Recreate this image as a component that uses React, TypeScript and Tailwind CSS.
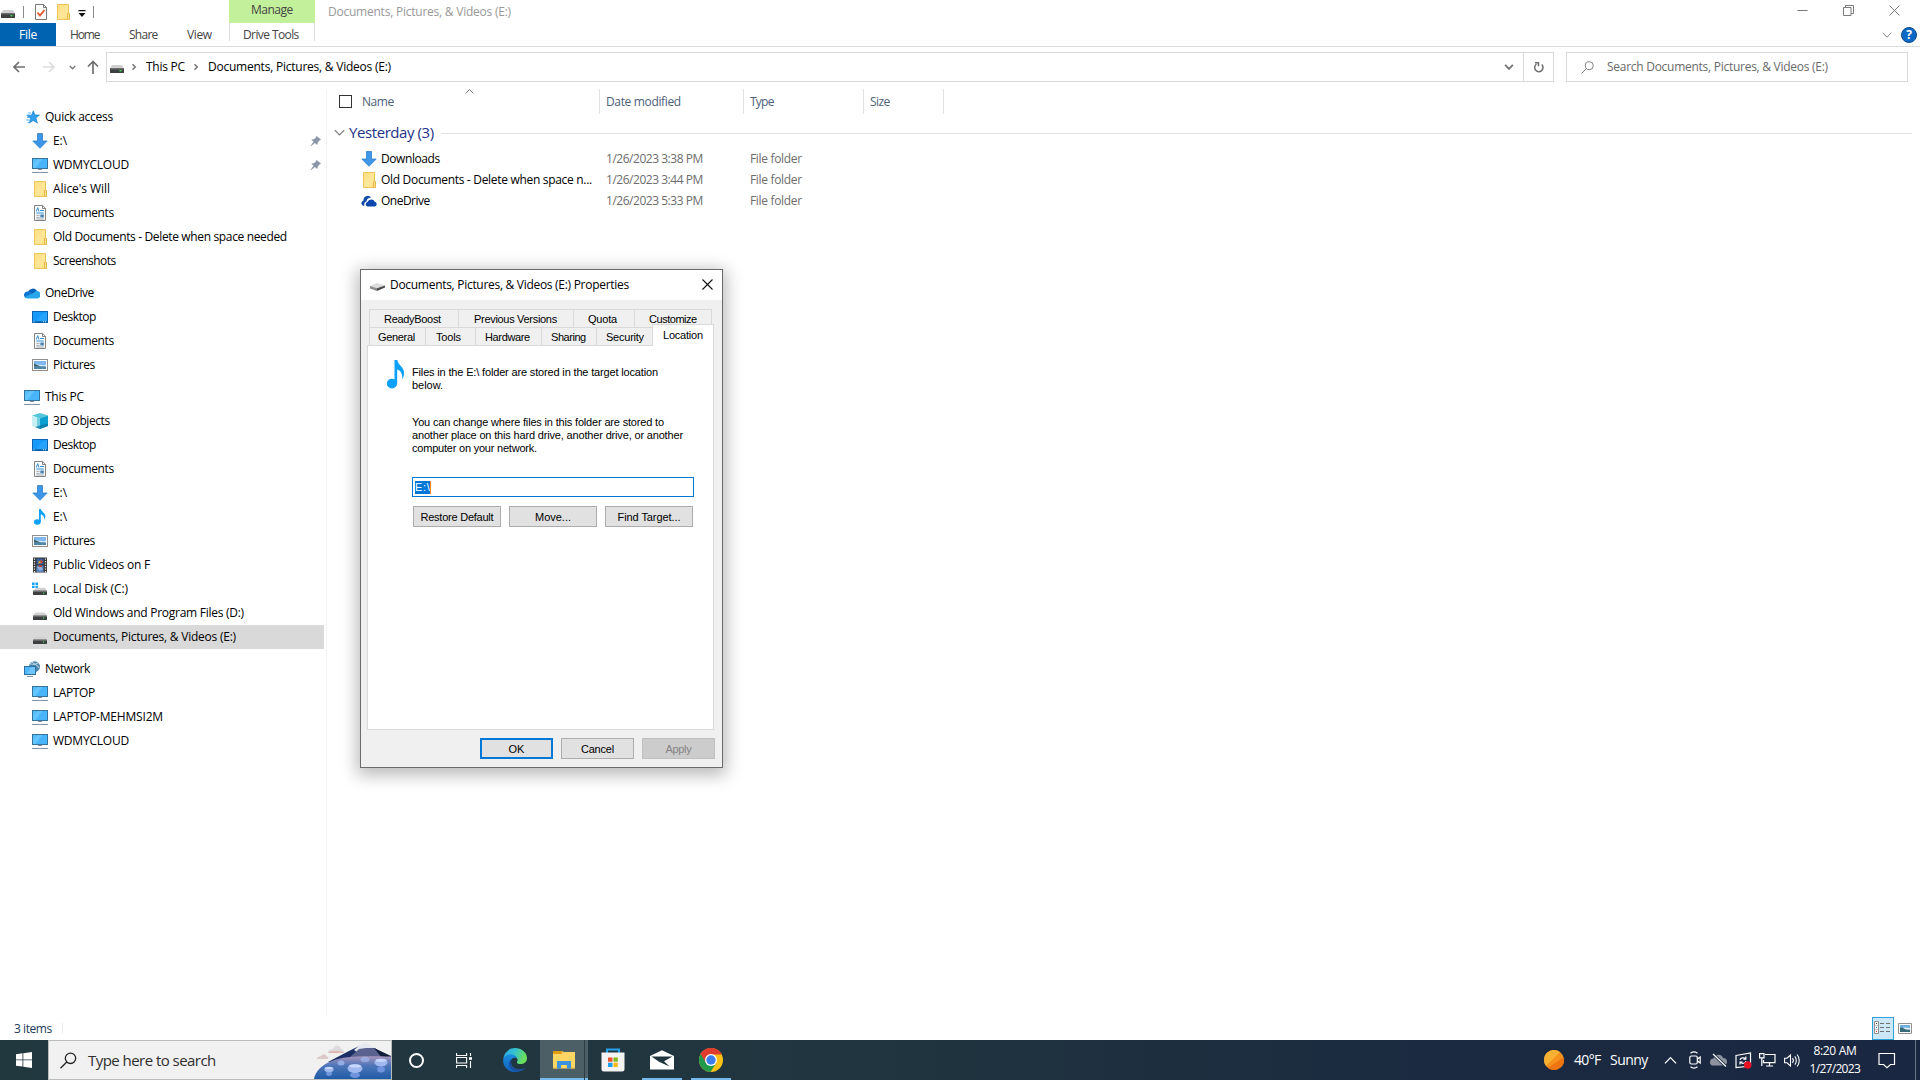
import { useLayoutEffect, useRef, useState } from "react";
import type { ReactNode } from "react";

/* Single line of text, tracked so that it fills the given width. */
function Label({ text, w, className = "" }: { text: string; w: number; className?: string }) {
  const ref = useRef<HTMLSpanElement>(null);
  const [ls, setLs] = useState(0);
  useLayoutEffect(() => {
    const el = ref.current;
    if (!el) return;
    el.style.letterSpacing = "0px";
    const natural = el.getBoundingClientRect().width;
    setLs((w - natural) / Math.max(1, text.length - 0.5));
  }, [text, w]);
  return (
    <span className={`flex shrink-0 whitespace-pre ${className}`} style={{ width: w }}>
      <span ref={ref} className="whitespace-pre" style={{ letterSpacing: `${ls}px` }}>
        {text}
      </span>
    </span>
  );
}

/* ---------- icons ---------- */
type P = { className?: string };

const Drive = ({ className = "" }: P) => (
  <svg className={`shrink-0 ${className}`} width="14" height="8" viewBox="0 0 14 8">
    <path d="M2 0h10l2 3.500H0z" fill="#cfcfcf" />
    <rect y="3" width="14" height="5" rx=".6" fill="#3d3f40" />
    <rect y="3" width="14" height="1.400" fill="#6d6f70" />
    <rect x="9.500" y="5" width="2" height="1.400" fill="#3fe04f" />
  </svg>
);
const Drive16 = () => (
  <svg width="16" height="16" viewBox="0 0 16 16">
    <path d="M3.200 7.500h9.600l2.200 3.500H1z" fill="#d2d2d2" />
    <rect x="1" y="10.800" width="14" height="4.200" rx=".6" fill="#3d3f40" />
    <rect x="1" y="10.500" width="14" height="1.200" fill="#77797a" />
    <rect x="11" y="12.400" width="1.200" height="1.200" fill="#3fe04f" />
  </svg>
);
const DriveC = () => (
  <svg width="16" height="16" viewBox="0 0 16 16">
    <path d="M0 1.500h2.600v2.400H0zM3.400 1.500H6v2.400H3.400zM0 4.700h2.600v2.400H0zM3.400 4.700H6v2.400H3.400z" fill="#18a2f2" />
    <path d="M4.500 6.800h8.700L15 10H1.500z" fill="#d2d2d2" />
    <rect x="1" y="9.800" width="14" height="4.200" rx=".6" fill="#3d3f40" />
    <rect x="1" y="9.600" width="14" height="1.200" fill="#77797a" />
    <rect x="11" y="11.500" width="1.200" height="1.200" fill="#3fe04f" />
  </svg>
);
const Folder = () => (
  <svg width="16" height="16" viewBox="0 0 16 16">
    <path d="M2.500.5h11v15h-11z" fill="#ffe18b" stroke="#edc558" />
    <path d="M3 9.500 11.500 1H13v9l-5 5H3z" fill="#ffe79f" opacity=".6" />
    <path d="M12.500 9.500h2v6h-2z" fill="#ffe18b" stroke="#e6b94a" />
  </svg>
);
const Down = () => (
  <svg width="16" height="16" viewBox="0 0 16 16">
    <path d="M5.500.5h5v7.500h4.700L8 15.300.8 8h4.700z" fill="#3d97e6" stroke="#2f7fc9" strokeWidth=".8" />
  </svg>
);
const Monitor = () => (
  <svg width="16" height="16" viewBox="0 0 16 16">
    <rect x=".5" y="1.500" width="15" height="10" fill="#55bdfb" stroke="#35739b" />
    <path d="M1 11V7l5-5h9v9z" fill="#7ccdfd" opacity=".45" />
    <path d="M10 2h5v9H3.500z" fill="#2fa9f7" opacity=".55" />
    <path d="M6 12.500h4M0 15.500h16" stroke="#8695a5" />
  </svg>
);
const Doc = () => (
  <svg width="16" height="16" viewBox="0 0 16 16">
    <path d="M2.500.5h8.200l2.800 2.800v12.200h-11z" fill="#fff" stroke="#858585" />
    <path d="M10.500.5v3h3" fill="none" stroke="#858585" />
    <path d="M4.300 6.500 5.700 2.600 7 6.500M8 5.500h4M4.300 8h7.500" fill="none" stroke="#2b8fd8" />
    <path d="M4.300 10.300h3.400M4.300 12.300h3.400M4.300 14h7.500" stroke="#8f9aa5" strokeWidth=".9" />
    <rect x="8.300" y="9.500" width="3.600" height="3" fill="#4b84b3" />
  </svg>
);
const Desktop = () => (
  <svg width="16" height="16" viewBox="0 0 16 16">
    <rect x=".5" y="2.500" width="15" height="11" fill="#169bfb" stroke="#0c66b4" />
    <path d="M5 12C7 7 11 4 15 3v9z" fill="#3fb0ff" opacity=".4" />
    <path d="M1 13h14" stroke="#0a4f91" />
    <path d="M1.500 12.800h1M11 12.800h1M13 12.800h1" stroke="#fff" strokeWidth=".9" />
  </svg>
);
const Pic = () => (
  <svg width="16" height="16" viewBox="0 0 16 16">
    <rect x=".5" y="2.500" width="15" height="11" fill="#fff" stroke="#8f8f8f" />
    <rect x="2" y="4" width="12" height="8" fill="#7db8ee" />
    <path d="M2 7.500c3-1 6 1 12 .6V10H2z" fill="#d9ecf7" />
    <path d="M2 6.500c3 1.500 5 2 8 3.200H2z" fill="#35606a" />
    <path d="M2 10c4-.8 8-.8 12-.4V12H2z" fill="#4d86a8" />
  </svg>
);
const Note = ({ w = 16, h = 16 }: { w?: number; h?: number }) => (
  <svg width={w} height={h} viewBox="0 0 16 16" preserveAspectRatio="none" className="shrink-0">
    <ellipse cx="5.300" cy="13" rx="3.400" ry="2.700" fill="#0aa0fb" />
    <path d="M7 0h1.900c.2 2.700 4.800 3.800 4.500 7.600-.1 1.200-.6 2.300-1.300 3.200.5-3-.8-5-3.300-5.600V13H7z" fill="#0aa0fb" />
  </svg>
);
const Film = () => (
  <svg width="16" height="16" viewBox="0 0 16 16">
    <rect x="1" y=".5" width="14" height="15" fill="#333" />
    <rect x="4.500" y="1.500" width="7" height="6" fill="#3a5f9c" />
    <rect x="4.500" y="8.500" width="7" height="6.500" fill="#5a86c4" />
    <path d="M8 2.500l3 2-2 2.500z" fill="#d9482b" />
    <path d="M5 10l3-1 3 3-3 2z" fill="#8fb2de" />
    <path d="M7 3.500l2 2-3 1.500z" fill="#e1a62b" />
    <path d="M6 8.500h4v1.500H7z" fill="#c93f2b" />
    <path d="M2.500 1.500v14M13.500 1.500v14" stroke="#eee" strokeWidth="1.300" strokeDasharray="1.300 1.200" />
  </svg>
);
const Cube = () => (
  <svg width="16" height="16" viewBox="0 0 16 16">
    <path d="M0 2.500 8 0l8 2.500L8 6z" fill="#53c6dc" />
    <path d="M0 2.500 8 5.500V16l-8-3z" fill="#c9eef3" />
    <path d="M16 2.500 8 5.500V16l8-3z" fill="#0c9fd0" />
    <path d="M5 4.500 8 5.500V16l-3-1.200z" fill="#6fd0e2" />
    <path d="M8 12.500l8-2v2.500l-8 3-5-1.900z" fill="#0b74a3" opacity=".75" />
  </svg>
);
const Star = () => (
  <svg width="16" height="16" viewBox="0 0 16 16">
    <path d="m9.300 1.800 1.600 4.200 4.600.1-3.600 3 1.500 5-4.200-2.600-4 2.600 1.400-4.700L3 6.600l4.500-.4z" fill="#2f9fee" stroke="#1b7fc9" strokeWidth=".7" />
    <path d="M4 4h3M2.500 6h3M3 8.500h3M2 11h3.500M3.500 13.500h2" stroke="#4ab0f4" strokeWidth=".9" />
  </svg>
);
const Cloud = () => (
  <svg width="16" height="16" viewBox="0 0 16 16">
    <path d="M4 7a5 5 0 0 1 9-1l-2 4z" fill="#0364b8" />
    <path d="M0 10.500A3.500 3.500 0 0 1 4 6.600c3 0 5 2 7 4L3.500 13A3 3 0 0 1 0 10.500z" fill="#0f78d4" />
    <path d="M13 6a3.700 3.700 0 0 1-.3 7.400H3.300A3.400 3.400 0 0 1 .8 12L9 8.200A6 6 0 0 1 13 6z" fill="#28a8ea" />
  </svg>
);
const CloudDark = () => (
  <svg width="16" height="16" viewBox="0 0 16 16">
    <path d="M.4 10.200A2.800 2.800 0 0 1 2.500 7.500 4.200 4.200 0 0 1 10 4.500C7 4.600 5.700 6.500 5.500 8.500c-2 .3-2.700 2.600-2 4.300C1.500 12.800.4 11.600.4 10.200z" fill="#0f4aa8" />
    <path d="M6.500 13.500a2.300 2.300 0 0 1 0-4.500 4 4 0 0 1 7.300-.3 2.500 2.500 0 0 1 .2 4.800z" fill="#0b47ad" />
  </svg>
);
const NetworkIcon = () => (
  <svg width="16" height="16" viewBox="0 0 16 16">
    <circle cx="10.500" cy="5.700" r="5.500" fill="#4d86ad" />
    <path d="M6 3c2-.5 3 1 5 .2S14 2 14.500 3M8 1c2 2 6 3 7 6" stroke="#c6dcea" strokeWidth="1" fill="none" />
    <rect x=".5" y="5.500" width="11" height="8" fill="#50b8fa" stroke="#2d6f9e" />
    <path d="M7 6h4v7H3z" fill="#8bd2fe" opacity=".5" />
    <path d="M3 15.500h6" stroke="#8695a5" />
  </svg>
);
const Pin = () => (
  <svg className="shrink-0" width="12" height="12" viewBox="0 0 12 12">
    <path d="M6.500.8 11.300 5 9.700 5.300 7.800 7.500 7.300 10 4.900 8 .9 11.300.5 10.900 3.500 6.800 1.300 4.500 4 4.200 6.200 2.300z" fill="#8a96a8" />
  </svg>
);
const Chevron = ({ className = "", dir = "down", w = 10 }: P & { dir?: "down" | "up"; w?: number }) => (
  <svg className={`shrink-0 ${className}`} width={w} height={w} viewBox="0 0 10 10" fill="none" stroke="currentColor">
    <path d={dir === "down" ? "M.7 2.800 5 7.200 9.300 2.800" : "M.7 7.200 5 2.800 9.300 7.200"} />
  </svg>
);
const Thick = ({ dir, w = 8 }: { dir: "down" | "right"; w?: number }) => (
  <svg className="shrink-0" width={w} height={w} viewBox="0 0 8 8" fill="none" stroke="#767676" strokeWidth="1.500">
    <path d={dir === "down" ? "M.9 2.300 4 5.500 7.100 2.300" : "M2.500 1.200 5.300 4 2.500 6.800"} />
  </svg>
);
const Arrow = ({ color, up = false }: { color: string; up?: boolean }) => (
  <svg className="shrink-0" width="14" height="14" viewBox="0 0 14 14" fill="none" stroke={color} strokeWidth="1.700">
    <path d={up ? "M7 14V1.500M2 6.500 7 1.500l5 5" : "M13 7H2M7 2 2 7l5 5"} />
  </svg>
);

/* ---------- navigation pane ---------- */
type Item = { icon: ReactNode; text: string; w: number; pin?: boolean; selected?: boolean };
const groups: { head: Item; items: Item[] }[] = [
  {
    head: { icon: <Star />, text: "Quick access", w: 68 },
    items: [
      { icon: <Down />, text: "E:\\", w: 14, pin: true },
      { icon: <Monitor />, text: "WDMYCLOUD", w: 76, pin: true },
      { icon: <Folder />, text: "Alice's Will", w: 57 },
      { icon: <Doc />, text: "Documents", w: 61 },
      { icon: <Folder />, text: "Old Documents - Delete when space needed", w: 234 },
      { icon: <Folder />, text: "Screenshots", w: 63 },
    ],
  },
  {
    head: { icon: <Cloud />, text: "OneDrive", w: 49 },
    items: [
      { icon: <Desktop />, text: "Desktop", w: 43 },
      { icon: <Doc />, text: "Documents", w: 61 },
      { icon: <Pic />, text: "Pictures", w: 42 },
    ],
  },
  {
    head: { icon: <Monitor />, text: "This PC", w: 39 },
    items: [
      { icon: <Cube />, text: "3D Objects", w: 57 },
      { icon: <Desktop />, text: "Desktop", w: 43 },
      { icon: <Doc />, text: "Documents", w: 61 },
      { icon: <Down />, text: "E:\\", w: 14 },
      { icon: <Note />, text: "E:\\", w: 14 },
      { icon: <Pic />, text: "Pictures", w: 42 },
      { icon: <Film />, text: "Public Videos on F", w: 97 },
      { icon: <DriveC />, text: "Local Disk (C:)", w: 75 },
      { icon: <Drive16 />, text: "Old Windows and Program Files (D:)", w: 191 },
      { icon: <Drive16 />, text: "Documents, Pictures, & Videos (E:)", w: 183, selected: true },
    ],
  },
  {
    head: { icon: <NetworkIcon />, text: "Network", w: 45 },
    items: [
      { icon: <Monitor />, text: "LAPTOP", w: 42 },
      { icon: <Monitor />, text: "LAPTOP-MEHMSI2M", w: 110 },
      { icon: <Monitor />, text: "WDMYCLOUD", w: 76 },
    ],
  },
];

function NavPane() {
  return (
    <nav className="flex w-[327px] shrink-0 flex-col gap-2 border-r border-[#f2f2f2] pt-4 text-black">
      {groups.map((g) => (
        <div key={g.head.text}>
          <div className="flex h-6 items-center gap-[5px] pl-6">
            {g.head.icon}
            <Label text={g.head.text} w={g.head.w} />
          </div>
          {g.items.map((i, n) => (
            <div key={n} className={`flex h-6 w-[324px] items-center gap-[5px] pl-8 ${i.selected ? "bg-[#d9d9d9]" : ""}`}>
              {i.icon}
              <Label text={i.text} w={i.w} />
              {i.pin && (
                <span className="ml-auto mr-[2px]">
                  <Pin />
                </span>
              )}
            </div>
          ))}
        </div>
      ))}
    </nav>
  );
}

/* ---------- top bars ---------- */
function TitleBar() {
  return (
    <div className="flex h-[23px] items-start">
      <div className="flex h-[23px] w-[229px] items-center pl-px">
        <Drive className="mt-1" />
        <span className="ml-2 h-3 w-px bg-[#8a8a8a]" />
        <svg className="ml-[11px]" width="12" height="16" viewBox="0 0 12 16">
          <path d="M.5.5h8l3 3v12H.5z" fill="#fff" stroke="#777" />
          <path d="M8.500.5v3h3" fill="none" stroke="#777" />
          <path d="m2.500 8.500 2.500 3L9.500 6" fill="none" stroke="#e25a2b" strokeWidth="1.900" />
        </svg>
        <span className="ml-2">
          <Folder />
        </span>
        <svg className="ml-[7px] mt-1" width="8" height="8" viewBox="0 0 8 8">
          <path d="M.5 0h7v1.200h-7zM.5 3h7L4 7z" fill="#111" />
        </svg>
        <span className="ml-[7px] h-3 w-px bg-[#8a8a8a]" />
      </div>
      <div className="flex h-[23px] w-[86px] justify-center bg-[#c3f09b] pt-[2px] text-[#444]">
        <Label text="Manage" w={42} />
      </div>
      <div className="ml-[13px] pt-1 text-[#999]">
        <Label text="Documents, Pictures, & Videos (E:)" w={183} />
      </div>
      <div className="ml-auto flex items-center gap-[35px] pr-5 pt-[5px]">
        <svg width="11" height="11" viewBox="0 0 11 11" stroke="#7a7a7a">
          <path d="M.5 5.500h10" />
        </svg>
        <svg width="11" height="11" viewBox="0 0 11 11" stroke="#7a7a7a" fill="none">
          <path d="M.5 2.500h7.500v8H.5zM2.500 2.500v-2h8v8H8" />
        </svg>
        <svg width="11" height="11" viewBox="0 0 11 11" stroke="#7a7a7a">
          <path d="m.5.5 10 10M10.500.5l-10 10" />
        </svg>
      </div>
    </div>
  );
}

function RibbonTabs() {
  return (
    <div className="flex h-6 border-b border-[#dadbdc] text-[#444]">
      <div className="flex h-[23px] w-14 items-center justify-center bg-[#0063b1] text-white">
        <Label text="File" w={18} />
      </div>
      <div className="flex h-[23px] items-center pl-[14px]">
        <Label text="Home" w={30} />
        <Label text="Share" w={29} className="ml-[29px]" />
        <Label text="View" w={25} className="ml-[29px]" />
      </div>
      <div className="ml-[17px] flex h-[18px] w-[86px] border-x border-[#dcdcdc] pl-[13px] pt-[4px]">
        <Label text="Drive Tools" w={56} />
      </div>
      <div className="ml-auto flex h-[23px] items-center gap-[9px] pr-[3px]">
        <Chevron className="text-[#8a8a8a]" />
        <span className="flex size-4 items-center justify-center rounded-full border border-[#0a4d8c] bg-[#0b68c4] text-[12px] font-bold leading-none text-white">
          ?
        </span>
      </div>
    </div>
  );
}

function AddressBar() {
  return (
    <div className="flex h-[42px] items-center pb-[2px]">
      <div className="flex w-[106px] items-center pl-3">
        <Arrow color="#6f6f6f" />
        <span className="ml-4 rotate-180">
          <Arrow color="#dcdcdc" />
        </span>
        <span className="ml-[13px]">
          <Thick dir="down" w={7} />
        </span>
        <span className="ml-[10px]">
          <Arrow color="#6f6f6f" up />
        </span>
      </div>
      <div className="flex h-[30px] w-[1448px] items-center border border-[#d9d9d9] pl-[3px] text-black">
        <Drive className="mt-1" />
        <span className="ml-[6px] w-[8px]">
          <Thick dir="right" />
        </span>
        <Label text="This PC" w={39} className="ml-2" />
        <span className="ml-[7px] w-[8px]">
          <Thick dir="right" />
        </span>
        <Label text="Documents, Pictures, & Videos (E:)" w={183} className="ml-2" />
        <div className="ml-auto flex h-full items-center">
          <Thick dir="down" w={10} />
          <div className="ml-[9px] flex h-full w-[30px] items-center justify-center border-l border-[#d9d9d9]">
            <svg width="12" height="12" viewBox="0 0 12 12" fill="none" stroke="#6f6f6f" strokeWidth="1.500">
              <path d="M3.500 3A4.200 4.200 0 1 0 8.800 3.500M2 1.700h3.500v3.500" />
            </svg>
          </div>
        </div>
      </div>
      <div className="ml-3 flex h-[30px] w-[342px] items-center border border-[#d9d9d9] pl-[14px] text-[#6a6a6a]">
        <svg width="13" height="13" viewBox="0 0 13 13" fill="none" stroke="#808080">
          <circle cx="8.300" cy="4.700" r="4" />
          <path d="M5.500 7.500.5 12.500" />
        </svg>
        <Label text="Search Documents, Pictures, & Videos (E:)" w={221} className="ml-[13px]" />
      </div>
    </div>
  );
}

/* ---------- file list ---------- */
const files = [
  { icon: <Down />, name: "Downloads", w: 59, date: "1/26/2023 3:38 PM" },
  { icon: <Folder />, name: "Old Documents - Delete when space n...", w: 211, date: "1/26/2023 3:44 PM" },
  { icon: <CloudDark />, name: "OneDrive", w: 49, date: "1/26/2023 5:33 PM" },
];

function FileList() {
  return (
    <main className="flex flex-1 flex-col">
      <div className="flex h-[25px] text-[#4c607a]">
        <div className="relative flex w-[273px] items-center border-r border-[#e2e2e2] pl-3">
          <span className="size-[13px] border border-[#333]" />
          <Label text="Name" w={32} className="ml-[10px]" />
          <Chevron dir="up" w={9} className="absolute -top-[2px] left-[138px] text-[#666]" />
        </div>
        <div className="flex w-[144px] items-center border-r border-[#e2e2e2] pl-[6px]">
          <Label text="Date modified" w={75} />
        </div>
        <div className="flex w-[120px] items-center border-r border-[#e2e2e2] pl-[6px]">
          <Label text="Type" w={24} />
        </div>
        <div className="flex w-[80px] items-center border-r border-[#e2e2e2] pl-[6px]">
          <Label text="Size" w={20} />
        </div>
      </div>
      <div className="mt-[7px] flex h-6 items-center pl-[7px] pr-2 text-[15px] text-[#1e3287]">
        <Chevron w={11} className="-mt-[2px] text-[#777]" />
        <Label text="Yesterday (3)" w={85} className="-mt-[2px] ml-1" />
        <span className="ml-[7px] h-px flex-1 bg-[#e2e2e2]" />
      </div>
      <div className="mt-[3px]">
        {files.map((f) => (
          <div key={f.name} className="flex h-[21px] items-center pl-[34px] text-[#6d6d6d]">
            {f.icon}
            <div className="ml-1 w-[225px] text-black">
              <Label text={f.name} w={f.w} />
            </div>
            <div className="w-[144px]">
              <Label text={f.date} w={97} />
            </div>
            <Label text="File folder" w={52} />
          </div>
        ))}
      </div>
    </main>
  );
}

/* ---------- properties dialog ---------- */
const tabsTop = [
  { text: "ReadyBoost", tw: 57, w: "w-[90px] pl-[14px] border-l" },
  { text: "Previous Versions", tw: 83, w: "w-[115px] pl-[15px]" },
  { text: "Quota", tw: 29, w: "w-[61px] pl-[14px]" },
  { text: "Customize", tw: 48, w: "w-[77px] pl-[14px]" },
];
const tabsBottom = [
  { text: "General", tw: 37, w: "w-[57px] border-l border-r pl-[8px]" },
  { text: "Tools", tw: 25, w: "w-[50px] border-r pl-[10px]" },
  { text: "Hardware", tw: 45, w: "w-[66px] border-r pl-[9px]" },
  { text: "Sharing", tw: 35, w: "w-[55px] border-r pl-[9px]" },
  { text: "Security", tw: 38, w: "w-[55px] pl-[9px]" },
];

function Button({ text, tw, className }: { text: string; tw: number; className: string }) {
  return (
    <button className={`flex h-[21px] items-center justify-center ${className}`}>
      <Label text={text} w={tw} className="mt-[2px]" />
    </button>
  );
}

function PropertiesDialog() {
  return (
    <section className="absolute left-[360px] top-[269px] flex h-[499px] w-[363px] flex-col border border-[#6b6b6b] bg-[#f0f0f0] font-['Liberation_Sans',sans-serif] text-[11px] leading-[13px] text-black shadow-[0_4px_16px_3px_rgba(0,0,0,0.28)]">
      <header className="flex h-[30px] items-center bg-white pb-[2px] pl-[9px] pr-[9px] font-['Open_Sans',sans-serif] text-[12px]">
        <svg className="mt-[6px]" width="15" height="8" viewBox="0 0 15 8">
          <path d="M0 3 7 0l8 2.500L7 5.500z" fill="#dcdcdc" />
          <path d="M0 3l7 2.300V8L0 5.500z" fill="#8c8c8c" />
          <path d="M7 5.300 15 2.500v2L7 8z" fill="#4a4a4a" />
        </svg>
        <Label text="Documents, Pictures, & Videos (E:) Properties" w={239} className="ml-[5px]" />
        <svg className="ml-auto" width="11" height="11" viewBox="0 0 11 11" stroke="#111" strokeWidth="1.100">
          <path d="m.5.5 10 10M10.500.5l-10 10" />
        </svg>
      </header>
      <div className="mt-[9px] flex h-[18px] pl-2">
        {tabsTop.map((t) => (
          <div key={t.text} className={`flex border-r border-t border-[#d9d9d9] pt-[3px] ${t.w}`}>
            <Label text={t.text} w={t.tw} />
          </div>
        ))}
      </div>
      <div className="flex h-[18px] pl-2">
        {tabsBottom.map((t) => (
          <div key={t.text} className={`flex border-t border-[#d9d9d9] pt-[3px] ${t.w}`}>
            <Label text={t.text} w={t.tw} />
          </div>
        ))}
        <div className="relative z-10 -mt-[3px] flex h-[22px] w-[62px] justify-center border-x border-t border-[#d9d9d9] bg-white pt-[4px]">
          <Label text="Location" w={40} />
        </div>
      </div>
      <div className="ml-[6px] h-[385px] w-[347px] border border-[#d9d9d9] bg-white pl-4 pt-[14px]">
        <div className="flex">
          <Note w={24} h={29} />
          <div className="ml-1 mt-[6px]">
            <Label text="Files in the E:\ folder are stored in the target location" w={246} />
            <Label text="below." w={31} />
          </div>
        </div>
        <div className="ml-7 mt-[24px]">
          <Label text="You can change where files in this folder are stored to" w={252} />
          <Label text="another place on this hard drive, another drive, or another" w={271} />
          <Label text="computer on your network." w={125} />
        </div>
        <div className="ml-7 mt-[22px] flex h-5 w-[282px] items-center border border-[#0078d7] pl-[2px]">
          <span className="flex h-[13px] w-4 border-r border-[#ff8728] bg-[#0078d7] text-white">
            <Label text="E:\" w={15} />
          </span>
        </div>
        <div className="ml-[29px] mt-[9px] flex gap-2">
          <Button text="Restore Default" tw={73} className="w-[88px] border border-[#adadad] bg-[#e1e1e1]" />
          <Button text="Move..." tw={36} className="w-[88px] border border-[#adadad] bg-[#e1e1e1]" />
          <Button text="Find Target..." tw={63} className="w-[88px] border border-[#adadad] bg-[#e1e1e1]" />
        </div>
      </div>
      <footer className="mt-2 flex justify-end gap-2 pr-[7px]">
        <Button text="OK" tw={16} className="w-[73px] border-2 border-[#0078d7] bg-[#e1e1e1]" />
        <Button text="Cancel" tw={33} className="w-[73px] border border-[#adadad] bg-[#e1e1e1]" />
        <Button text="Apply" tw={26} className="w-[73px] border border-[#bfbfbf] bg-[#cccccc] text-[#838383]" />
      </footer>
    </section>
  );
}

/* ---------- status bar ---------- */
function StatusBar() {
  return (
    <div className="flex h-6 items-center pl-[14px] text-[#1e395b]">
      <Label text="3 items" w={38} className="mt-[2px]" />
      <span className="ml-[10px] h-[11px] w-px bg-[#ececec]" />
      <div className="ml-auto flex items-center gap-1 pr-2">
        <div className="flex h-[23px] w-[22px] items-center justify-center border border-[#2da0da] bg-[#cce8f6]">
          <svg width="18" height="14" viewBox="0 0 18 14">
            <path d="M.5.5h4v12h-4z" fill="#fff" stroke="#909090" />
            <path d="M1 4.500h3M1 8.500h3" stroke="#c9c9c9" />
            <path d="M2 2.500h1" stroke="#333" />
            <path d="M2 6.500h1" stroke="#2f7fd0" />
            <path d="M2 10.500h1" stroke="#e03a2f" />
            <path d="M6 2.500h4M12 2.500h4M6 6.500h4M12 6.500h4M6 10.500h4M12 10.500h4" stroke="#707070" />
          </svg>
        </div>
        <svg width="14" height="11" viewBox="0 0 14 11">
          <path d="M.5.500h13v10H.5z" fill="#fff" stroke="#909090" />
          <path d="M2 2h10v7H2z" fill="#6faee0" />
          <path d="M2 4.500c4 0 6 3 10 2V9H2z" fill="#3a6a78" />
          <path d="M5 5c3-1 5 0 7 0v1.500H8z" fill="#dcecf5" />
        </svg>
      </div>
    </div>
  );
}

/* ---------- taskbar ---------- */
function MountainArt() {
  return (
    <svg width="77" height="38" viewBox="0 0 77 38">
      <defs>
        <linearGradient id="hill" x1="0" y1="0" x2="0" y2="1">
          <stop offset="0" stopColor="#a795bb" />
          <stop offset=".4" stopColor="#4f76b9" />
          <stop offset="1" stopColor="#1f5ba6" />
        </linearGradient>
      </defs>
      <path d="M3 18c-.5-2 2-2 4-3 2-3 5-2 6 .5 2 .5 2 2.500 0 2.500z" fill="#dcc9c8" />
      <path d="M14 12c-.5-3 3-3.500 5-4 2-5 7-4 8 0 3 0 4 4 2 4z" fill="#dcdadd" />
      <path d="M14 12c5-3 11-1 16-1l-1 1z" fill="#e0b3ab" />
      <path d="M14 21 33 11l8-4 9-4 12 5 15 9v5z" fill="#1c2e63" />
      <path d="m40 9 6-5 5-3 6 4 5 3-4 3-4-4-4 3-3-2-4 3z" fill="#e6e8f0" />
      <path d="m36 16 9-8 7-1 9 0 8 9z" fill="#5a638f" />
      <path d="m60 7 17 8v2H68z" fill="#101c38" />
      <path d="M0 38C2 27 15 16 44 15.500c12-.5 24 0 33 0V38z" fill="url(#hill)" />
      <g fill="#6f93dc">
        <ellipse cx="15" cy="32.500" rx="3" ry="2.500" />
        <ellipse cx="41" cy="34" rx="5" ry="3" />
        <ellipse cx="67" cy="28.500" rx="4" ry="3" />
      </g>
      <g fill="#9fb8f0">
        <ellipse cx="15" cy="28.500" rx="4.600" ry="2.700" />
        <ellipse cx="41" cy="27.500" rx="7.500" ry="4.500" />
        <ellipse cx="67" cy="21.500" rx="6.500" ry="4" />
        <ellipse cx="27" cy="22" rx="3.500" ry="2.500" opacity=".8" />
        <ellipse cx="51" cy="18.500" rx="4.500" ry="2.800" opacity=".7" />
      </g>
      <g fill="#c9d8fa">
        <ellipse cx="15" cy="27" rx="4" ry="1.100" />
        <ellipse cx="41" cy="25" rx="6" ry="1.600" />
        <ellipse cx="67" cy="19.500" rx="5.500" ry="1.400" />
      </g>
    </svg>
  );
}

const EdgeIcon = () => (
  <svg width="24" height="24" viewBox="0 0 24 24">
    <defs>
      <linearGradient id="eg" x1="0" y1="0" x2="1" y2=".3">
        <stop offset="0" stopColor="#2aa5e6" />
        <stop offset=".5" stopColor="#35c1d0" />
        <stop offset="1" stopColor="#6be05a" />
      </linearGradient>
      <linearGradient id="eb" x1="0" y1="0" x2="0" y2="1">
        <stop offset="0" stopColor="#1b8fe0" />
        <stop offset="1" stopColor="#1260b8" />
      </linearGradient>
    </defs>
    <path d="M.3 11C1 4.500 6 0 12 0c6.500 0 12 4.500 12 10 0 4-3 6-6.500 6-2.500 0-4-1-3.500-2 1-1.500 1-4-2-5.500C8 6.500 2 8 .3 11z" fill="url(#eg)" />
    <path d="M.2 12C1 8 4.500 6 8 6.300c3.500.3 5.500 2.200 6 4.200-2-1.500-5.500-.5-6 2.500-.7 4 3 8.500 8.500 8.500 2 0 4-.5 5.700-1.500C20 22.500 16 24 12 24 5 24-.5 18.500.2 12z" fill="url(#eb)" />
    <path d="M8.500 11c-2 4.500 1.500 10 7.500 10.500 2.500.2 4.500-.5 6-1.500-4 5-12 4.500-15-.5C5 16 6 12.500 8.500 11z" fill="#1b4f9c" />
  </svg>
);
const ExplorerIcon = () => (
  <svg width="22" height="18" viewBox="0 0 22 18">
    <path d="M0 0h9l1.500 1H22v16.500H0z" fill="#ffd664" />
    <path d="M0 0h8.500l1 1.500L8.500 3H0z" fill="#e39c10" />
    <path d="M4 10h14v7.500h-4V14H8v3.500H4z" fill="#3b92de" />
    <path d="M0 16.500h4v1H0zM18 16.500h4v1h-4z" fill="#efb53a" />
  </svg>
);
const StoreIcon = () => (
  <svg width="24" height="24" viewBox="0 0 24 24">
    <path d="M6 5V1.500h12V5" fill="none" stroke="#27a3ee" strokeWidth="2" />
    <path d="M.5 4.500h23V21a2.500 2.500 0 0 1-2.500 2.500H3A2.500 2.500 0 0 1 .5 21z" fill="#f3f3f3" />
    <path d="M7 9.500h4.500v4.200H7z" fill="#f0502a" />
    <path d="M12.500 9.500h4.300v4.200h-4.300z" fill="#80b91a" />
    <path d="M7 14.700h4.500V19H7z" fill="#1aa1ee" />
    <path d="M12.500 14.700h4.300V19h-4.300z" fill="#fdb813" />
  </svg>
);
const MailIcon = () => (
  <svg width="24" height="20" viewBox="0 0 24 20">
    <path d="M0 6 12 .3 24 6v13.500H0z" fill="#fff" />
    <path d="M1.500 6.500h21L14 11.200l5.500 5.300L9 11.800z" fill="#20353e" />
  </svg>
);
const ChromeIcon = () => (
  <svg width="24" height="24" viewBox="0 0 24 24">
    <circle cx="12" cy="12" r="12" fill="#fbc116" />
    <path d="M12 12 1.600 6A12 12 0 0 0 11.500 24l5.700-9z" fill="#229a4b" />
    <path d="M12 6.500h10.700A12 12 0 0 0 1.600 6l5.500 9z" fill="#df3b2f" />
    <circle cx="12" cy="12" r="6" fill="#fff" />
    <circle cx="12" cy="12" r="4.700" fill="#3d7df0" />
  </svg>
);

function Taskbar() {
  return (
    <footer className="flex h-10 items-stretch bg-[linear-gradient(90deg,#22383f_0%,#20353f_45%,#1b2a40_75%,#1a2742_100%)] text-[15px] text-white">
      <div className="flex w-12 items-center justify-center">
        <svg width="16" height="16" viewBox="0 0 16 16" fill="#fff">
          <path d="M0 2.200 6.500 1.300v6.200H0zM7.300 1.200 16 0v7.500H7.300zM0 8.300h6.500v6.300L0 13.700zM7.300 8.300H16V16l-8.700-1.200z" />
        </svg>
      </div>
      <div className="flex w-[344px] items-center border border-[#b9bcbd] bg-[#f1f1f1] pl-[11px] text-[#2f2f2f]">
        <svg width="17" height="17" viewBox="0 0 17 17" fill="none" stroke="#222" strokeWidth="1.300">
          <circle cx="10.500" cy="6.300" r="5.200" />
          <path d="M6.800 10 .5 16.300" />
        </svg>
        <Label text="Type here to search" w={128} className="ml-[11px]" />
        <span className="ml-auto">
          <MountainArt />
        </span>
      </div>
      <div className="flex w-12 items-center justify-center">
        <span className="size-[15px] rounded-full border-2 border-white" />
      </div>
      <div className="flex w-12 items-center justify-center">
        <svg width="16" height="15" viewBox="0 0 16 15" fill="none" stroke="#fff" strokeWidth="1.100">
          <path d="M.6 0v2.500h10V0M.6 4.500h10v5.500H.6zM.6 15v-2.500h10V15M14.500 0v3M14.500 8v7" />
          <path d="M13 4.200h3v2.600h-3z" fill="#fff" stroke="none" />
        </svg>
      </div>
      <div className="ml-[3px] flex w-12 items-center justify-center">
        <EdgeIcon />
      </div>
      <div className="relative ml-[1px] flex w-12 items-center bg-[#4c5e66] pl-[13px]">
        <ExplorerIcon />
        <span className="absolute bottom-0 left-0 h-[2px] w-full bg-[#76b9ed]" />
        <span className="absolute inset-y-0 right-[3px] w-px bg-[#2b3c43]" />
      </div>
      <div className="flex w-[49px] items-center justify-center">
        <StoreIcon />
      </div>
      <div className="relative flex w-[49px] items-center justify-center">
        <MailIcon />
        <span className="absolute bottom-0 left-[5px] h-[2px] w-10 bg-[#76b9ed]" />
      </div>
      <div className="relative flex w-[49px] items-center justify-center">
        <ChromeIcon />
        <span className="absolute bottom-0 left-[5px] h-[2px] w-10 bg-[#76b9ed]" />
      </div>
      <div className="ml-auto flex items-center">
        <svg width="20" height="20" viewBox="0 0 20 20">
          <circle cx="10" cy="10" r="10" fill="#f5921e" />
          <path d="M0 10a10 10 0 0 1 16-8L2 16A10 10 0 0 1 0 10z" fill="#f8b133" />
          <path d="M4 18 19.500 7a10 10 0 0 1-15.500 11z" fill="#ee7512" />
        </svg>
        <Label text="40°F" w={27} className="ml-[10px] text-[14px]" />
        <Label text="Sunny" w={38} className="ml-[9px] text-[14px]" />
        <Chevron dir="up" w={13} className="ml-[16px]" />
        <svg className="ml-[11px]" width="14" height="18" viewBox="0 0 14 18" fill="none" stroke="#fff" strokeWidth="1.200">
          <rect x="1.800" y="5" width="7.500" height="8" rx="1.500" />
          <path d="m9.500 8 2.700-2v6L9.500 10M2.500 2.200C4.500.7 7.500.7 9.500 2.200M2.500 15.800c2 1.500 5 1.500 7 0" />
        </svg>
        <svg className="ml-2" width="17" height="14" viewBox="0 0 17 14">
          <path d="M0 9a3.500 3.500 0 0 1 3.500-3.500A5 5 0 0 1 13 5a3.500 3.500 0 0 1 .5 7.500h-10A3.400 3.400 0 0 1 0 9z" fill="#8d949f" />
          <path d="m3 1 13 12.500" stroke="#1b2841" strokeWidth="3" />
          <path d="m3 1 13 12.500" stroke="#fff" strokeWidth="1.200" />
        </svg>
        <svg className="ml-[8px]" width="17" height="17" viewBox="0 0 17 17" fill="none" stroke="#fff" strokeWidth="1.200">
          <path d="M1 3.500 15.500 1v13L1 15.500z" />
          <path d="M5 8c.5-2.500 4-3 5.500-1M10.800 4.500V7.200H8.300M11 9c-.5 2.500-4 3.200-5.500 1.200M5 12.500V10h2.500" />
          <circle cx="12.700" cy="13" r="3.700" fill="#e81123" stroke="none" />
        </svg>
        <svg className="ml-[7px]" width="17" height="14" viewBox="0 0 17 14" fill="none" stroke="#fff" strokeWidth="1.200">
          <path d="M6 1.500h10v8.200H4.500V7M10.500 10v3M7 13h7M.6.700H5v4.200H.6zM2.800 5v8" />
        </svg>
        <svg className="ml-[8px]" width="17" height="15" viewBox="0 0 17 15" fill="none" stroke="#fff" strokeWidth="1.100">
          <path d="M.6 5.200H3L6.500 2v11L3 9.800H.6zM8.500 5.200c1 1.300 1 3.300 0 4.600M10.800 3.300c2 2.300 2 6.100 0 8.400M13 1.500c3 3.300 3 8.700 0 12" />
        </svg>
        <div className="ml-[7px] flex w-[54px] flex-col items-center text-[12px] leading-[18px]">
          <Label text="8:20 AM" w={43} />
          <Label text="1/27/2023" w={51} />
        </div>
        <svg className="ml-[16px]" width="18" height="17" viewBox="0 0 18 17" fill="none" stroke="#fff" strokeWidth="1.200">
          <path d="M1 1.500h15.500v11h-4L9 15.700l-3.500-3.200H1z" />
        </svg>
        <span className="ml-[19px] mr-1 h-10 w-px bg-[#6d7687]" />
      </div>
    </footer>
  );
}

export default function App() {
  return (
    <div className="relative flex h-[1080px] w-[1920px] flex-col overflow-hidden bg-white font-['Open_Sans',sans-serif] text-[12px] leading-4">
      <TitleBar />
      <RibbonTabs />
      <AddressBar />
      <div className="flex h-[927px]">
        <NavPane />
        <FileList />
      </div>
      <StatusBar />
      <Taskbar />
      <PropertiesDialog />
    </div>
  );
}
